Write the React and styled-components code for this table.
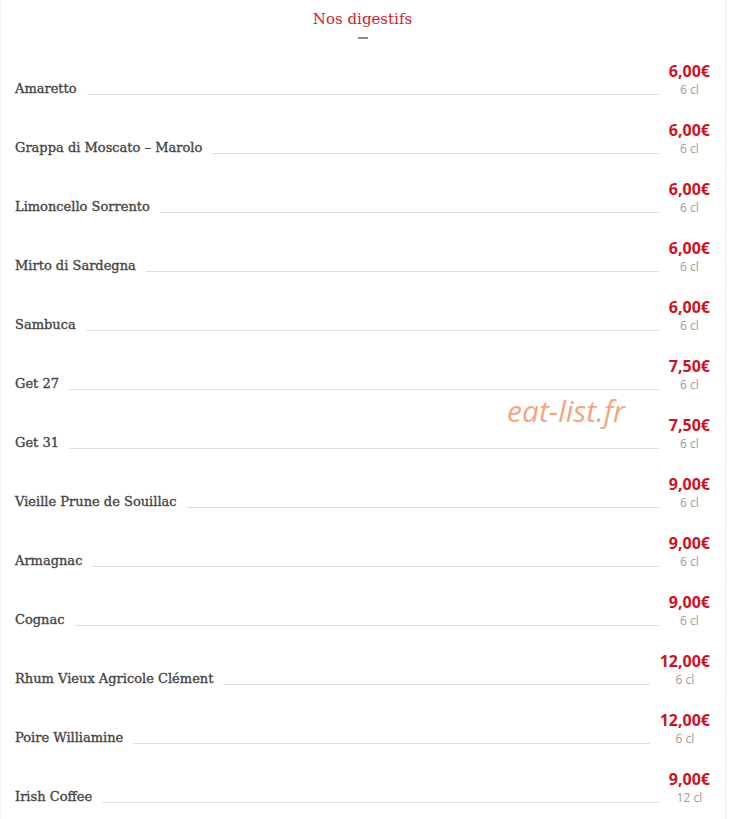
import React from "react";
import styled, { createGlobalStyle } from "styled-components";

const Global = createGlobalStyle`
  html, body { margin: 0; padding: 0; background: #fff; }
  body { width: 729px; }
`;

const Page = styled.div`
  position: relative;
  width: 726px;
  box-sizing: border-box;
  border-right: 1px solid #ececec;
  border-left: 1px solid #f6f6f6;
  padding: 8px 15px 0 14px;
  min-height: 819px;
`;

const Header = styled.header`
  display: flex;
  flex-direction: column;
  align-items: center;
  margin-bottom: 22px;
`;

const Title = styled.h2`
  margin: 0;
  font-family: "DejaVu Serif", serif;
  font-weight: normal;
  font-size: 15px;
  line-height: 22px;
  color: #d0212b;
`;

const Dash = styled.span`
  display: block;
  width: 10px;
  height: 2px;
  margin-top: 7px;
  background: #8a8a8a;
`;

const List = styled.div`
  display: flex;
  flex-direction: column;
  gap: 21px;
`;

const Row = styled.div`
  display: flex;
  align-items: flex-end;
  height: 38px;
`;

const Name = styled.span`
  font-family: "DejaVu Serif", serif;
  font-size: 13px;
  font-weight: 500;
  line-height: 20px;
  color: #454545;
  -webkit-text-stroke: 0.35px #454545;
  white-space: nowrap;
`;

const Leader = styled.span`
  flex: 1;
  height: 1px;
  background: #dedede;
  margin: 0 10px 4px;
`;

const PriceBlock = styled.div`
  display: flex;
  flex-direction: column;
  align-items: center;
  font-family: "Open Sans", sans-serif;
`;

const Price = styled.span`
  font-size: 16px;
  font-weight: 700;
  line-height: 20px;
  color: #d0101f;
`;

const Volume = styled.span`
  font-size: 12px;
  line-height: 18px;
  color: #9a9a9a;
`;

const Watermark = styled.span`
  position: absolute;
  left: 506px;
  top: 390px;
  font-family: "Open Sans", sans-serif;
  font-style: italic;
  font-size: 30px;
  color: #f4a582;
  pointer-events: none;
`;

const items = [
  ["Amaretto", "6,00€", "6 cl"],
  ["Grappa di Moscato – Marolo", "6,00€", "6 cl"],
  ["Limoncello Sorrento", "6,00€", "6 cl"],
  ["Mirto di Sardegna", "6,00€", "6 cl"],
  ["Sambuca", "6,00€", "6 cl"],
  ["Get 27", "7,50€", "6 cl"],
  ["Get 31", "7,50€", "6 cl"],
  ["Vieille Prune de Souillac", "9,00€", "6 cl"],
  ["Armagnac", "9,00€", "6 cl"],
  ["Cognac", "9,00€", "6 cl"],
  ["Rhum Vieux Agricole Clément", "12,00€", "6 cl"],
  ["Poire Williamine", "12,00€", "6 cl"],
  ["Irish Coffee", "9,00€", "12 cl"],
];

export default function App() {
  return (
    <>
      <Global />
      <Page>
        <Header>
          <Title>Nos digestifs</Title>
          <Dash />
        </Header>
        <List>
          {items.map(([n, p, v]) => (
            <Row key={n}>
              <Name>{n}</Name>
              <Leader />
              <PriceBlock>
                <Price>{p}</Price>
                <Volume>{v}</Volume>
              </PriceBlock>
            </Row>
          ))}
        </List>
        <Watermark>eat-list.fr</Watermark>
      </Page>
    </>
  );
}
